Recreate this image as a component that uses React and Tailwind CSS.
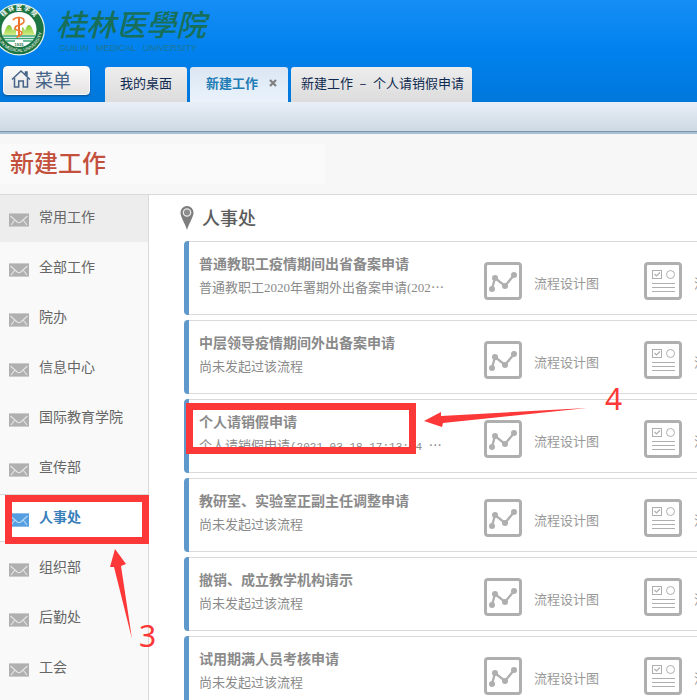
import React from "react";

const departments = [
  "常用工作",
  "全部工作",
  "院办",
  "信息中心",
  "国际教育学院",
  "宣传部",
  "人事处",
  "组织部",
  "后勤处",
  "工会",
];

const none = "尚未发起过该流程";

const flows = [
  {
    title: "普通教职工疫情期间出省备案申请",
    note: (
      <>
        普通教职工<Serif>2020</Serif>年署期外出备案申请<Serif>(202</Serif>…
      </>
    ),
  },
  { title: "中层领导疫情期间外出备案申请", note: none },
  {
    title: "个人请销假申请",
    note: (
      <>
        个人请销假申请<span className="font-['Liberation_Mono',monospace] text-[11px]">(2021-03-18 17:13:04 </span>…
      </>
    ),
  },
  { title: "教研室、实验室正副主任调整申请", note: none },
  { title: "撤销、成立教学机构请示", note: none },
  { title: "试用期满人员考核申请", note: none },
];

function Serif({ children }) {
  return <span className="font-['Liberation_Serif',serif]">{children}</span>;
}

function Seal() {
  return (
    <svg viewBox="0 0 54 54" className="-ml-2 mt-[2px] h-[54px] w-[54px] shrink-0" aria-hidden="true">
      <defs>
        <path id="seal-top" d="M7.500 27a19.500 19.500 0 0 1 39 0" />
        <path id="seal-bottom" d="M4 27a23 23 0 0 0 46 0" />
        <linearGradient id="hill" x1="0" y1="0" x2="0" y2="1">
          <stop offset="0" stopColor="#7cc62f" />
          <stop offset="1" stopColor="#d5ec86" />
        </linearGradient>
      </defs>
      <circle cx="27" cy="27.500" r="26" fill="#e6f4ee" />
      <circle cx="27" cy="27.500" r="24.800" fill="#1c7442" />
      <circle cx="27" cy="27.500" r="17.500" fill="#fff" />
      <path d="M11 33c2-3 3-10 6-10 2 0 3 3 4 6 1-3 2-4 3-4v8zM43 33c-2-3-3-10-6-10-2 0-3 3-4 6-1-3-2-4-3-4v8z" fill="url(#hill)" />
      <path d="M11 34h32M12 36.500h30M14 39h9M31 39h9" stroke="#38a576" strokeWidth="1.300" />
      <path d="M27 15v20" stroke="#e9702a" strokeWidth="2" />
      <path d="M21 18c3-4 11-3 11 1 0 5-9 3-9 7 0 3 7 2 7 5s-5 2-5 5" fill="none" stroke="#ee7b32" strokeWidth="1.600" />
      <text x="27" y="43.500" textAnchor="middle" fontSize="4" fontWeight="700" fill="#146b3c" className="font-['Liberation_Sans',sans-serif]">1935</text>
      <text fontSize="6" fontWeight="700" fill="#fff" className="font-['Noto_Sans_CJK_SC',sans-serif]">
        <textPath href="#seal-top" startOffset="50%" textAnchor="middle">桂 林 医 学 院</textPath>
      </text>
      <text fontSize="4.500" fill="#fff" className="font-['Liberation_Sans',sans-serif]">
        <textPath href="#seal-bottom" startOffset="50%" textAnchor="middle">GUILIN MEDICAL UNIVERSITY</textPath>
      </text>
    </svg>
  );
}

function HomeIcon() {
  return (
    <svg viewBox="0 0 20 20" className="h-5 w-5" fill="none" stroke="#466487" strokeWidth="1.500" aria-hidden="true">
      <path d="M1 10.500 10 2l9 8.500M3.500 9v9h4.200v-6h4.600v6h4.200V9M14.500 5.500V3H16v4" />
    </svg>
  );
}

function Envelope({ active }) {
  return (
    <svg viewBox="0 0 20 14" className="h-[14px] w-5 shrink-0" aria-hidden="true">
      <rect width="20" height="14" rx="1" fill={active ? "#559ee2" : "#b0b0b0"} />
      <path
        d="M1.500 3 8.200 9q1.800 1.300 3.600 0L18.500 3M2 12l3.500-4.500M18 12l-3.500-4.500"
        fill="none"
        stroke={active ? "#b9daf6" : "#e4e4e4"}
        strokeWidth="1.200"
      />
      <path d="M0 .5h20M0 13.500h20" stroke={active ? "#8abdec" : "#cccccc"} />
    </svg>
  );
}

function Pin() {
  return (
    <svg viewBox="0 0 14 24" className="h-6 w-[14px]" aria-hidden="true">
      <path d="M7 0a6.500 6.500 0 0 1 6.500 6.700C13.500 11 9 17 7 24 5 17 .5 11 .5 6.700A6.500 6.500 0 0 1 7 0z" fill="#7d7d7d" />
      <circle cx="7" cy="6.500" r="3.700" fill="#8c8c8c" stroke="#e8e8e8" strokeWidth="1.300" />
    </svg>
  );
}

function ChartIcon() {
  return (
    <svg viewBox="0 0 38 38" className="h-[38px] w-[38px]" aria-hidden="true">
      <rect x="1.500" y="1.500" width="35" height="35" rx="2.500" fill="#fff" stroke="#afafaf" strokeWidth="3" />
      <path d="M8 27 11 16 21 24 30 13" fill="none" stroke="#afafaf" strokeWidth="2.300" />
      <g fill="#afafaf">
        <circle cx="8" cy="27" r="3" />
        <circle cx="11" cy="16" r="3" />
        <circle cx="21" cy="24" r="3" />
        <circle cx="30" cy="13" r="3" />
      </g>
    </svg>
  );
}

function FormIcon() {
  return (
    <svg viewBox="0 0 38 38" className="h-[38px] w-[38px]" fill="none" stroke="#afafaf" aria-hidden="true">
      <rect x="1.500" y="1.500" width="35" height="35" rx="2.500" fill="#fff" strokeWidth="3" />
      <rect x="8.500" y="8.500" width="9" height="8" />
      <path d="m10.500 12 2 2 3.500-3.500" strokeWidth="1.200" />
      <circle cx="26.500" cy="12.500" r="4" />
      <path d="M8 21.500h23M8 25.500h23M8 29.500h23" />
    </svg>
  );
}

function FlowCard({ title, note }) {
  return (
    <article className="flex h-[74px] min-w-[720px]">
      <div className="w-[5px] shrink-0 rounded-l-[4px] bg-[#5f99cc]" />
      <div className="flex flex-1 border-y border-[#dadada] bg-white">
        <div className="w-[295px] shrink-0 pl-[10px] pt-[11px] text-[#8a8a8a]">
          <h3 className="text-sm leading-5 font-bold whitespace-nowrap">{title}</h3>
          <p className="mt-1 text-[13px] leading-5 whitespace-pre">{note}</p>
        </div>
        <a href="#design" className="flex w-40 shrink-0 gap-3 pt-5 text-[13px] leading-[42px] text-[#999]">
          <ChartIcon />
          流程设计图
        </a>
        <a href="#form" className="flex w-40 shrink-0 gap-3 pt-5 text-[13px] leading-[42px] text-[#999]">
          <FormIcon />
          流程表单
        </a>
      </div>
    </article>
  );
}

function Header() {
  const tab = "flex h-[35px] items-center rounded-t-[3px] pb-1 text-[13px] whitespace-nowrap";
  return (
    <header className="bg-linear-to-b from-[#158ef5] via-[#0081ee] to-[#0078dc]">
      <div className="flex h-[66px] items-start overflow-hidden">
        <Seal />
        <div className="ml-[10px] pt-[5px]">
          <div className="font-['Noto_Sans_CJK_TC',sans-serif] text-[30px] leading-9 font-medium whitespace-nowrap text-[#176f59] italic">
            桂林医學院
          </div>
          <div className="mt-[3px] flex gap-[7px] pl-[3px] font-['Liberation_Sans',sans-serif] text-[9px] leading-[9px] text-[#1c7795]">
            <span>GUILIN</span>
            <span>MEDICAL</span>
            <span>UNIVERSITY</span>
          </div>
        </div>
      </div>
      <div className="flex h-9 items-start pl-[3px]">
        <button
          type="button"
          className="flex h-[29px] w-[87px] items-center gap-1 rounded-[4px] border border-[#f8f8f8] bg-linear-to-b from-[#fafafa] to-[#e5e2e2] pb-1 pl-[7px] text-lg leading-6 text-[#466487] shadow-[0_1px_2px_#0d4f8c]"
        >
          <HomeIcon />
          菜单
        </button>
        <nav className="mt-px ml-[15px] flex gap-[3px] text-[#0f2a50]">
          <button type="button" className={tab + " bg-linear-to-b from-[#ededed] to-[#dcdcdc] px-[15px]"}>
            我的桌面
          </button>
          <button type="button" className={tab + " gap-2 bg-linear-to-b from-[#dbe6f2] to-[#eaf3fc] pr-2 pl-4 font-bold text-[#1f7cb5]"}>
            新建工作
            <svg viewBox="0 0 14 14" className="h-[14px] w-[14px]" aria-label="关闭">
              <path d="m4 4 6 6M10 4l-6 6" stroke="#808080" strokeWidth="2.200" />
            </svg>
          </button>
          <button type="button" className={tab + " bg-linear-to-b from-[#ededed] to-[#dcdcdc] pr-2 pl-[10px]"}>
            <span>新建工作</span>
            <span className="w-5 text-center">–</span>
            <span>个人请销假申请</span>
          </button>
        </nav>
      </div>
    </header>
  );
}

function Annotations() {
  return (
    <>
      <div className="absolute top-[495px] left-[5px] h-[49px] w-36 border-7 border-[#fc3838]" />
      <div className="absolute top-[403px] left-[186px] h-[51px] w-[230px] border-7 border-[#fc3838]" />
      <svg viewBox="0 0 697 700" className="absolute top-0 left-0 h-[700px] w-[697px]" fill="#fc3838" aria-hidden="true">
        <path d="M424 421 441 412 441 416 587 408 443 423 442 427z" />
        <path d="M115 549 126 564 121 566 132 639 114 567 110 567z" />
      </svg>
      <span className="absolute top-[616px] left-[139px] font-['Noto_Sans',sans-serif] text-[30px] leading-10 text-[#fc3838]">3</span>
      <span className="absolute top-[379px] left-[605px] font-['Noto_Sans',sans-serif] text-[30px] leading-10 text-[#fc3838]">4</span>
    </>
  );
}

export default function App() {
  return (
    <div className="relative flex h-screen flex-col overflow-hidden bg-white font-['Noto_Sans_CJK_SC',sans-serif]">
      <Header />
      <div className="h-8 shrink-0 border-b-2 border-[#a9bfd4] bg-linear-to-b from-[#e9eff7] to-[#ccd8e3]">
        <div className="h-[30px] border-b border-[#8095a8]" />
      </div>
      <div className="h-[61px] shrink-0 border-b border-[#d9d9d9] bg-[#f7f7f7] pt-[10px]">
        <h1 className="h-10 w-[325px] bg-[#fafafa] pl-[10px] text-2xl leading-9 font-medium text-[#c2503c]">新建工作</h1>
      </div>
      <div className="flex min-h-0 flex-1">
        <nav className="w-[149px] shrink-0 overflow-hidden border-r border-[#dadada] bg-[#f9f9f9]">
          <ul className="-mt-px flex flex-col gap-[2px]">
            {departments.map((name, i) => {
              const active = name === "人事处";
              const look = active
                ? "border-y border-[#dadada] bg-white font-bold text-[#3a80bb]"
                : i === 0
                  ? "bg-[#ededed] text-[#666]"
                  : "text-[#666]";
              return (
                <li key={name}>
                  <a href="#dept" className={"flex h-12 items-center gap-[10px] pl-[9px] text-sm " + look}>
                    <span className="pt-[3px]">
                      <Envelope active={active} />
                    </span>
                    <span className="pb-1">{name}</span>
                  </a>
                </li>
              );
            })}
          </ul>
        </nav>
        <main className="min-w-0 flex-1 overflow-hidden pl-[35px]">
          <div className="-ml-1 flex h-[46px] items-center gap-2">
            <Pin />
            <h2 className="pb-[3px] text-lg leading-6 font-medium text-[#5c5c5c]">人事处</h2>
          </div>
          <div className="flex flex-col gap-[5px]">
            {flows.map((flow) => (
              <FlowCard key={flow.title} title={flow.title} note={flow.note} />
            ))}
          </div>
        </main>
      </div>
      <Annotations />
    </div>
  );
}
